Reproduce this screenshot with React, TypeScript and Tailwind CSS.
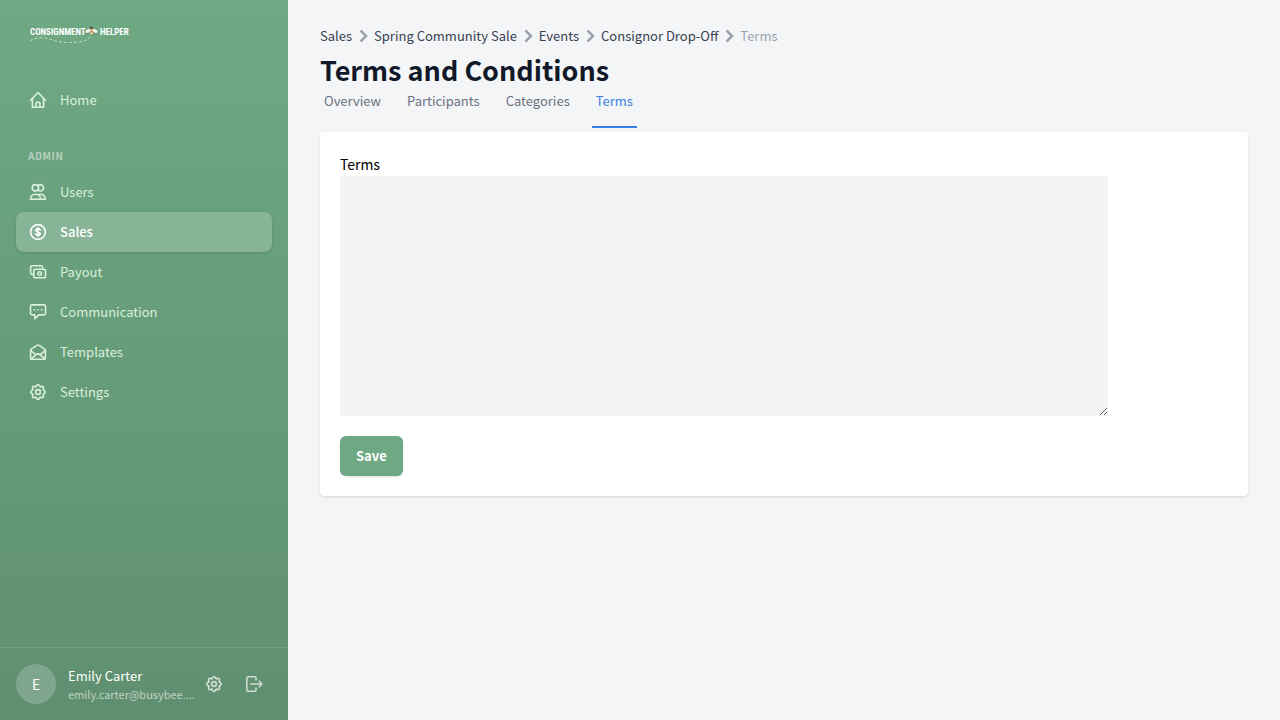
import type { ReactNode } from 'react'

type IconName =
  | 'home'
  | 'users'
  | 'sales'
  | 'payout'
  | 'communication'
  | 'templates'
  | 'settings'
  | 'logout'

const toothAngles = [0, 45, 90, 135, 180, 225, 270, 315]

const iconPaths: Record<IconName, ReactNode> = {
  home: (
    <>
      <path d="M2.600 10.300 9.300 3.200a1 1 0 0 1 1.400 0l6.700 7.100" />
      <path d="M4.400 8.600v8.700h11.200V8.600" />
      <path d="M8.100 17.200v-3.900a.9.9 0 0 1 .9-.9h2a.9.9 0 0 1 .9.9v3.900" />
    </>
  ),
  users: (
    <>
      <circle cx="7.400" cy="5.800" r="3.200" />
      <path d="M10 3.700a3.200 3.200 0 1 1 0 4.200" />
      <path d="M2.500 17.200c0-3.200 2-5 5-5s5 1.800 5 5z" />
      <path d="M10.500 12.700c3.200-1.200 7 .6 7 4.500h-5" />
    </>
  ),
  sales: (
    <>
      <circle cx="10" cy="10" r="7.400" />
      <path d="M12.200 7.900c-.4-.7-1.200-1-2.200-1-1.200 0-2.200.6-2.200 1.500 0 2.200 4.500 1 4.500 3.200 0 .9-1 1.500-2.300 1.500-1.100 0-2-.4-2.300-1.100M10 5.800v8.400" />
    </>
  ),
  payout: (
    <>
      <path d="M4.500 12.300H3.600a1 1 0 0 1-1-1V5a1.200 1.200 0 0 1 1.200-1.200h9.500A1.200 1.200 0 0 1 14.500 5v.7" />
      <rect x="5.800" y="7.200" width="11.700" height="8.500" rx="1.200" />
      <circle cx="11.700" cy="11.500" r="1.700" />
    </>
  ),
  communication: (
    <>
      <path d="M3.800 2.900h12.400a1.300 1.300 0 0 1 1.300 1.300v7.400a1.300 1.300 0 0 1-1.300 1.300h-5.400l-4 3.900v-3.900h-3a1.300 1.300 0 0 1-1.300-1.300V4.200a1.300 1.300 0 0 1 1.300-1.300z" />
      <path d="M6.500 7.900h.1M10 7.900h.1M13.400 7.900h.1" />
    </>
  ),
  templates: (
    <>
      <path d="M2.600 8.300c0-.5.200-.9.700-1.200l5.600-3.700a2 2 0 0 1 2.200 0l5.600 3.700c.5.300.7.700.7 1.200v7.800a1.100 1.100 0 0 1-1.100 1.100H3.700a1.100 1.100 0 0 1-1.100-1.100z" />
      <path d="m2.800 8.700 5.300 4.100M17.200 8.700l-5.300 4.100M3 16.800l4.900-4a3.300 3.300 0 0 1 4.200 0l4.900 4" />
    </>
  ),
  settings: (
    <>
      {toothAngles.map((angle) => (
        <path key={angle} d="M7.780 4.640C8.700 4.300 8.600 2.600 10 2.600s1.300 1.700 2.220 2.040" transform={`rotate(${angle} 10 10)`} />
      ))}
      <circle cx="10" cy="10" r="2.400" />
    </>
  ),
  logout: (
    <>
      <path d="M12 6V4.300a1.500 1.500 0 0 0-1.500-1.500H4.300a1.500 1.500 0 0 0-1.500 1.500v11.400a1.500 1.500 0 0 0 1.500 1.500h6.200a1.500 1.500 0 0 0 1.500-1.500V14" />
      <path d="M6.800 10h11M15.200 7.200 18 10l-2.800 2.800" />
    </>
  ),
}

function Icon({ name }: { name: IconName }) {
  return (
    <svg
      viewBox="0 0 20 20"
      className="size-5 shrink-0"
      fill="none"
      stroke="currentColor"
      strokeWidth="1.600"
      strokeLinecap="round"
      strokeLinejoin="round"
      aria-hidden="true"
    >
      {iconPaths[name]}
    </svg>
  )
}

function Logo() {
  return (
    <svg viewBox="0 0 104 24" className="h-6 w-[104px]" role="img" aria-label="Consignment Helper">
      <g fill="#fff" fontFamily="'Liberation Sans Narrow', 'Roboto Condensed', 'Noto Sans CJK SC', sans-serif" fontWeight="700" fontSize="9">
        <text x="2" y="15">CONSIGNMENT</text>
        <text x="72" y="15">HELPER</text>
      </g>
      <path d="M2 21c6-4 13-4 19-2 12 4 21 4 30 3 5-1 10-2 11-6" fill="none" stroke="#cfe6d6" strokeWidth=".8" strokeDasharray="3 2" />
      <ellipse cx="60.500" cy="11" rx="3.200" ry="1.900" fill="#f1f1ea" transform="rotate(-22 60.500 11)" />
      <ellipse cx="66.500" cy="11" rx="3.200" ry="1.900" fill="#f1f1ea" transform="rotate(22 66.500 11)" />
      <ellipse cx="63.500" cy="11" rx="2" ry="3.400" fill="#ecd0a4" />
      <circle cx="63.500" cy="8" r="1.600" fill="#5f5549" />
      <path d="M58 13.300c2 .4 3.500-.3 4-1.300M69 13.300c-2 .4-3.500-.3-4-1.300M62 11.800h3" fill="none" stroke="#6b6258" strokeWidth=".7" />
    </svg>
  )
}

interface NavItem {
  label: string
  icon: IconName
  active?: boolean
}

const adminItems: NavItem[] = [
  { label: 'Users', icon: 'users' },
  { label: 'Sales', icon: 'sales', active: true },
  { label: 'Payout', icon: 'payout' },
  { label: 'Communication', icon: 'communication' },
  { label: 'Templates', icon: 'templates' },
  { label: 'Settings', icon: 'settings' },
]

const crumbs = ['Sales', 'Spring Community Sale', 'Events', 'Consignor Drop-Off']
const tabs = ['Overview', 'Participants', 'Categories', 'Terms']

function NavLink({ label, icon, active }: NavItem) {
  return (
    <a
      href="#"
      aria-current={active ? 'page' : undefined}
      className={`flex h-10 items-center gap-3 rounded-lg px-3 ${
        active ? 'bg-white/20 font-medium text-white shadow-sm' : 'text-[#d9f0df] hover:bg-white/10'
      }`}
    >
      <Icon name={icon} />
      {label}
    </a>
  )
}

function Sidebar() {
  return (
    <aside className="flex w-72 shrink-0 flex-col bg-linear-to-b from-[#6fa983] to-[#5f8f70] text-[13px]">
      <div className="px-7 pt-5">
        <Logo />
      </div>
      <nav className="flex-1 px-4 pt-9">
        <NavLink label="Home" icon="home" />
        <h2 className="mt-7 mb-2 px-3 text-[10px] leading-4 font-bold tracking-wider text-white/50">ADMIN</h2>
        {adminItems.map((item) => (
          <NavLink key={item.label} {...item} />
        ))}
      </nav>
      <div className="flex items-center border-t border-white/10 py-4 pr-3.5 pl-4">
        <div className="mr-3 flex size-10 shrink-0 items-center justify-center rounded-full bg-white/20 text-sm text-white">
          E
        </div>
        <div className="min-w-0 flex-1 whitespace-nowrap">
          <p className="leading-5 text-white">Emily Carter</p>
          <p className="text-[11px] leading-4 text-white/60">emily.carter@busybee....</p>
        </div>
        <div className="flex text-white/70">
          <button type="button" aria-label="Account settings" className="flex size-10 items-center justify-center">
            <Icon name="settings" />
          </button>
          <button type="button" aria-label="Sign out" className="flex size-10 items-center justify-center">
            <Icon name="logout" />
          </button>
        </div>
      </div>
    </aside>
  )
}

function Chevron() {
  return (
    <svg viewBox="1 0 22 24" className="h-6 w-[22px] shrink-0 text-[#9ca3af]" fill="none" stroke="currentColor" strokeWidth="2.500" aria-hidden="true">
      <path d="m9.500 6.500 5.500 5.500-5.500 5.500" />
    </svg>
  )
}

export default function App() {
  return (
    <div className="flex min-h-screen bg-[#f3f5f7] font-['Noto_Sans_CJK_SC',sans-serif]">
      <Sidebar />
      <main className="min-w-0 flex-1 px-8 pt-6">
        <nav aria-label="Breadcrumb" className="flex h-6 items-center text-[13px] text-[#374151]">
          {crumbs.map((crumb) => (
            <span key={crumb} className="flex items-center">
              <a href="#">{crumb}</a>
              <Chevron />
            </span>
          ))}
          <span className="text-[#9ca3af]">Terms</span>
        </nav>
        <h1 className="mt-1 text-[27px] leading-9 font-bold text-[#111827]">Terms and Conditions</h1>
        <nav aria-label="Sale event" className="flex gap-[18px] text-[13px] text-[#6b7280]">
          {tabs.map((tab) => (
            <a
              key={tab}
              href="#"
              className={`h-10 border-b-2 px-1 pt-[3px] leading-5 ${
                tab === 'Terms' ? 'border-[#3b7fe4] text-[#3b7fe4]' : 'border-transparent'
              }`}
            >
              {tab}
            </a>
          ))}
        </nav>
        <form className="mt-1 rounded bg-white p-5 shadow-sm">
          <label htmlFor="terms" className="block text-sm leading-6 text-black">
            Terms
          </label>
          <textarea id="terms" className="block h-60 w-full max-w-3xl bg-gray-100 p-2" />
          <button type="submit" className="mt-5 h-10 rounded-md bg-[#6fa983] px-4 text-[13px] font-bold text-white shadow-sm">
            Save
          </button>
        </form>
      </main>
    </div>
  )
}
